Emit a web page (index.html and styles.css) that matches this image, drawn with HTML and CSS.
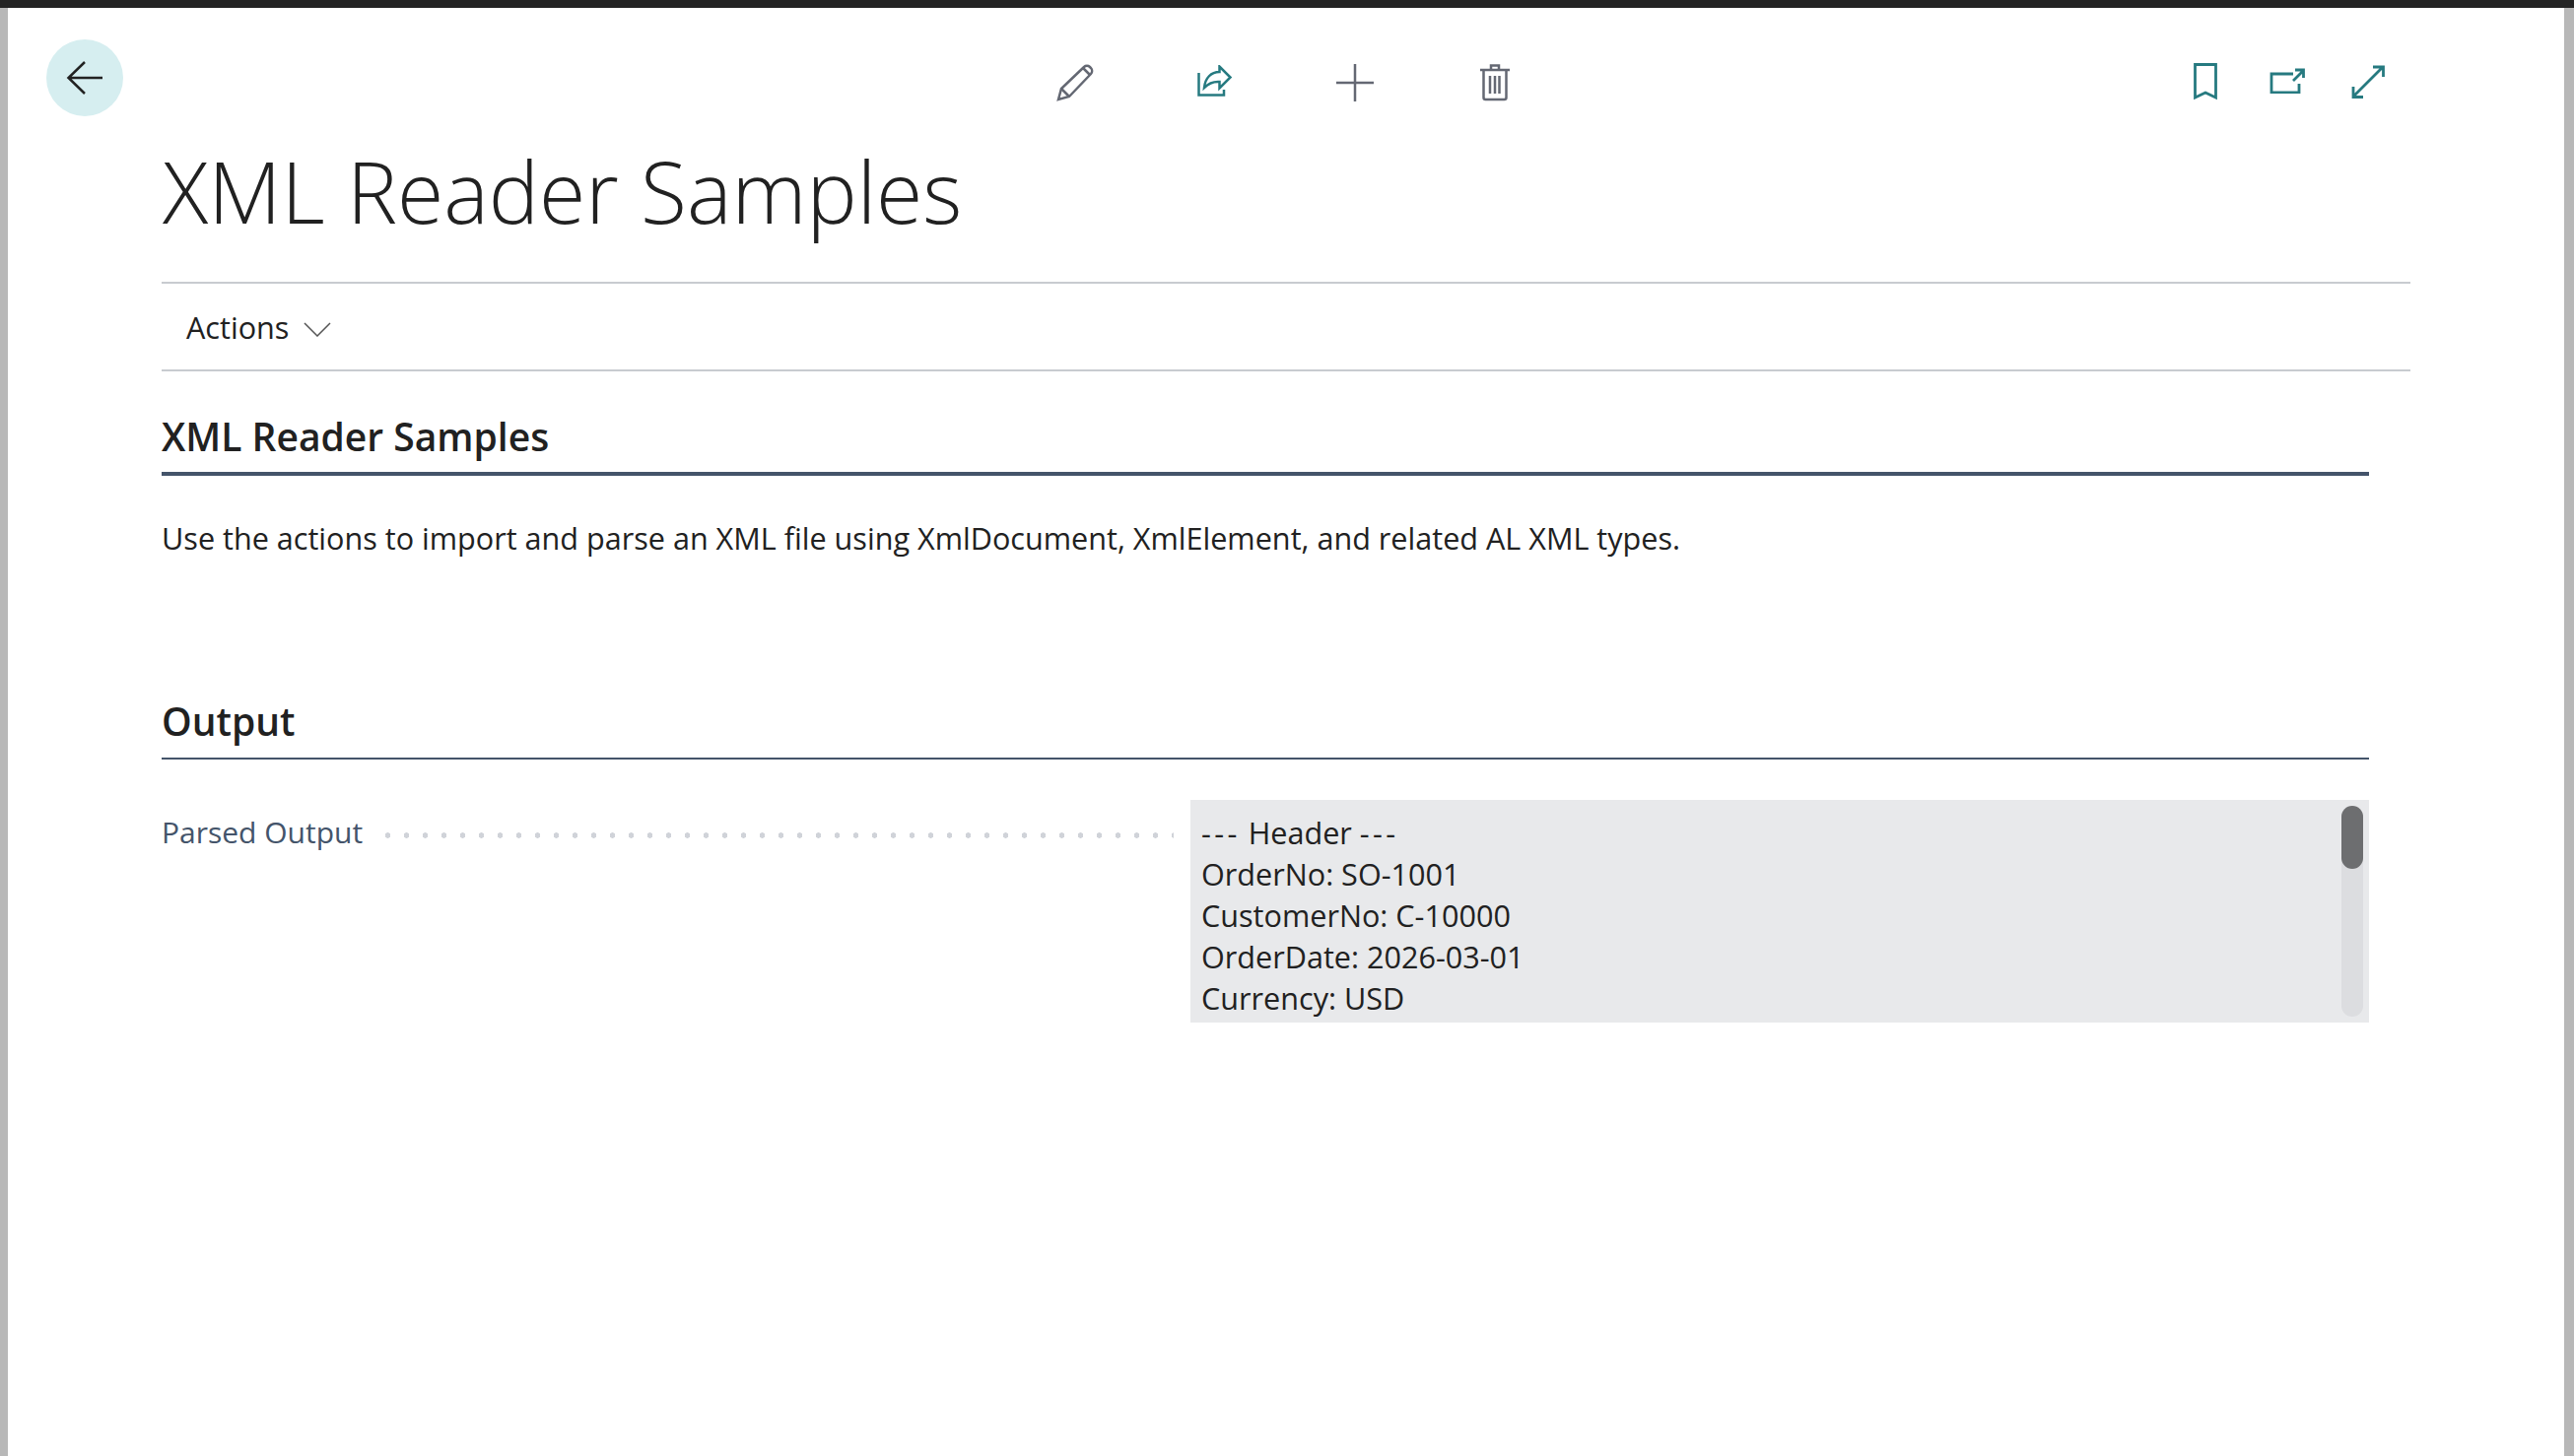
FILE: index.html
```html
<!DOCTYPE html>
<html lang="en">
<head>
<meta charset="utf-8">
<title>XML Reader Samples</title>
<link rel="stylesheet" href="styles.css">
</head>
<body>
<div class="topbar"></div>
<div class="frame">
  <main class="page">
    <header class="toolbar">
      <button class="back" aria-label="Back">
        <svg width="38" height="34" viewBox="0 0 38 34" class="ico"><path d="M19 1 2.500 17 19 33M2.500 17H37" fill="none" stroke="#222" stroke-width="2.500"/></svg>
      </button>
      <div class="tools tools-mid">
        <span class="cell"><svg class="ico" width="38" height="38" viewBox="0 0 38 38" fill="none" stroke="#646873" stroke-width="2.500"><path d="M2 36 5 25 28 3a4.500 4.500 0 0 1 6 0l1 1a4.500 4.500 0 0 1 0 6L13 33Z"/><path d="M5 25 13 33M27 4l7 7"/></svg></span>
        <span class="cell"><svg class="ico lift-2" width="36" height="32" viewBox="0 0 36 32" fill="none" stroke="#267a80" stroke-width="2.500"><path d="M1.500 8V30.500H27V25"/><path d="M7 23C8 13 14 7 22.500 7V1.500L33.500 12.500 22.500 23.500V17C16 16.500 11 19 7 23Z"/></svg></span>
        <span class="cell"><svg class="ico" width="38" height="38" viewBox="0 0 38 38" fill="none" stroke="#646873" stroke-width="2.500"><path d="M0 19H38M19 0V38"/></svg></span>
        <span class="cell"><svg class="ico" width="30" height="38" viewBox="0 0 30 38" fill="none" stroke="#646873" stroke-width="2.500"><path d="M0 6H30M11 6V1.500H19V6M3.500 6V34a2 2 0 0 0 2 2H24.500a2 2 0 0 0 2-2V6M10 12V30M15 12V30M19.500 12V30"/></svg></span>
      </div>
      <div class="tools tools-right">
        <span class="cell"><svg class="ico lift-1" width="24" height="38" viewBox="0 0 24 38" fill="none" stroke="#267a80" stroke-width="2.800"><path d="M1.500 1.500H22.500V35L12 30 1.500 35Z"/></svg></span>
        <span class="cell"><svg class="ico lift-4" width="36" height="26" viewBox="0 0 36 26" fill="none" stroke="#267a80" stroke-width="2.800"><path d="M24 6H2V25H30V16M24 13 34 3M26 2H34.500V10"/></svg></span>
        <span class="cell"><svg class="ico lift-1" width="34" height="34" viewBox="0 0 34 34" fill="none" stroke="#267a80" stroke-width="2.800"><path d="M2 32 32 2M22 2H32.500V12M2 22V32.500H12"/></svg></span>
      </div>
    </header>
    <h1 class="title">XML Reader Samples</h1>
    <nav class="actions">
      <span>Actions</span>
      <svg class="ico chevron" width="28" height="15" viewBox="0 0 28 15" fill="none" stroke="#555" stroke-width="1.500"><path d="M1 1 14 14 27 1"/></svg>
    </nav>
    <section class="group group-first">
      <h2 class="group-title">XML Reader Samples</h2>
      <p class="desc">Use the actions to import and parse an XML file using XmlDocument, XmlElement, and related AL XML types.</p>
    </section>
    <section class="group group-output">
      <h2 class="group-title">Output</h2>
      <div class="field">
        <div class="label-cell"><span class="label">Parsed Output</span><span class="dots"></span></div>
        <div class="value">
          <div class="lines">
            <div><span class="dash">---</span> Header <span class="dash">---</span></div>
            <div>OrderNo: SO-1001</div>
            <div>CustomerNo: C-10000</div>
            <div>OrderDate: 2026-03-01</div>
            <div>Currency: USD</div>
          </div>
          <div class="scroll"><div class="thumb"></div></div>
        </div>
      </div>
    </section>
  </main>
</div>
</body>
</html>
```
FILE: styles.css
```css
* { box-sizing: border-box; }
html, body { margin: 0; height: 100%; }
body {
  background: #fff;
  font-family: "Open Sans", "Noto Sans", sans-serif;
  color: #212121;
  display: flex;
  flex-direction: column;
  overflow: hidden;
}
.topbar { height: 8px; background: #242424; flex: none; }
.frame {
  flex: 1;
  border-left: 8px solid #b8b8b8;
  border-right: 10px solid #b8b8b8;
  background: #fff;
}
.ico { display: block; flex: none; }
.lift-1 { margin-bottom: 2px; }
.lift-2 { margin-bottom: 4px; }
.lift-4 { margin-bottom: 5px; }
.page { padding-left: 156px; padding-right: 156px; }
.toolbar {
  height: 112px;
  margin-left: -117px;
  padding-top: 32px;
  display: flex;
  align-items: flex-start;
}
.back {
  width: 78px;
  height: 78px;
  border: 0;
  padding: 0;
  flex: none;
  border-radius: 50%;
  background: #d6eef0;
  display: flex;
  align-items: center;
  justify-content: center;
}
.tools { display: flex; margin-top: 25px; height: 38px; }
.cell { width: 56px; height: 38px; display: flex; align-items: center; justify-content: center; flex: none; }
.tools-mid { margin-left: 938px; gap: 86px; }
.tools-right { margin-left: 665px; gap: 26.500px; }
.title {
  margin: 0;
  height: 168px;
  padding-top: 16px;
  padding-left: 1px;
  font-weight: 300;
  font-size: 86px;
  line-height: 116px;
  color: #212121;
  border-bottom: 2px solid #c8cbd0;
}
.actions {
  height: 89px;
  padding-left: 25px;
  display: flex;
  align-items: center;
  gap: 15px;
  font-size: 30.600px;
  border-bottom: 2px solid #c8cbd0;
}
.chevron { margin-top: 6px; }
.group { margin-right: 42px; }
.group-first { padding-top: 41px; height: 330px; }
.group-title {
  margin: 0;
  height: 65px;
  font-size: 39px;
  line-height: 50px;
  font-weight: 600;
  border-bottom: 4px solid #44546a;
}
.desc { margin: 42px 0 0; font-size: 30.600px; line-height: 42px; }
.group-output .group-title { height: 64px; border-bottom-width: 2px; }
.field {
  margin-top: 41px;
  display: grid;
  grid-template-columns: 1044px 1196px;
}
.label-cell { display: flex; padding-right: 17px; height: 54px; }
.label { font-size: 30px; line-height: 42px; color: #44546a; white-space: nowrap; margin-top: 12px; }
.dots {
  flex: 1;
  margin-left: 16px;
  margin-top: 33px;
  height: 6px;
  background-image: radial-gradient(circle, #d0d3d9 2.500px, transparent 3px);
  background-size: 19px 6px;
}
.value {
  height: 226px;
  background: #e8e9eb;
  padding: 12px 6px 6px 11px;
  display: flex;
  justify-content: space-between;
  font-size: 30.600px;
  line-height: 42px;
  overflow: hidden;
}
.dash { letter-spacing: 3.400px; }
.scroll {
  width: 22px;
  height: 214px;
  margin-top: -6px;
  background: #dcdde0;
  border-radius: 11px;
}
.thumb { height: 64px; background: #6d6e70; border-radius: 11px; }
```
